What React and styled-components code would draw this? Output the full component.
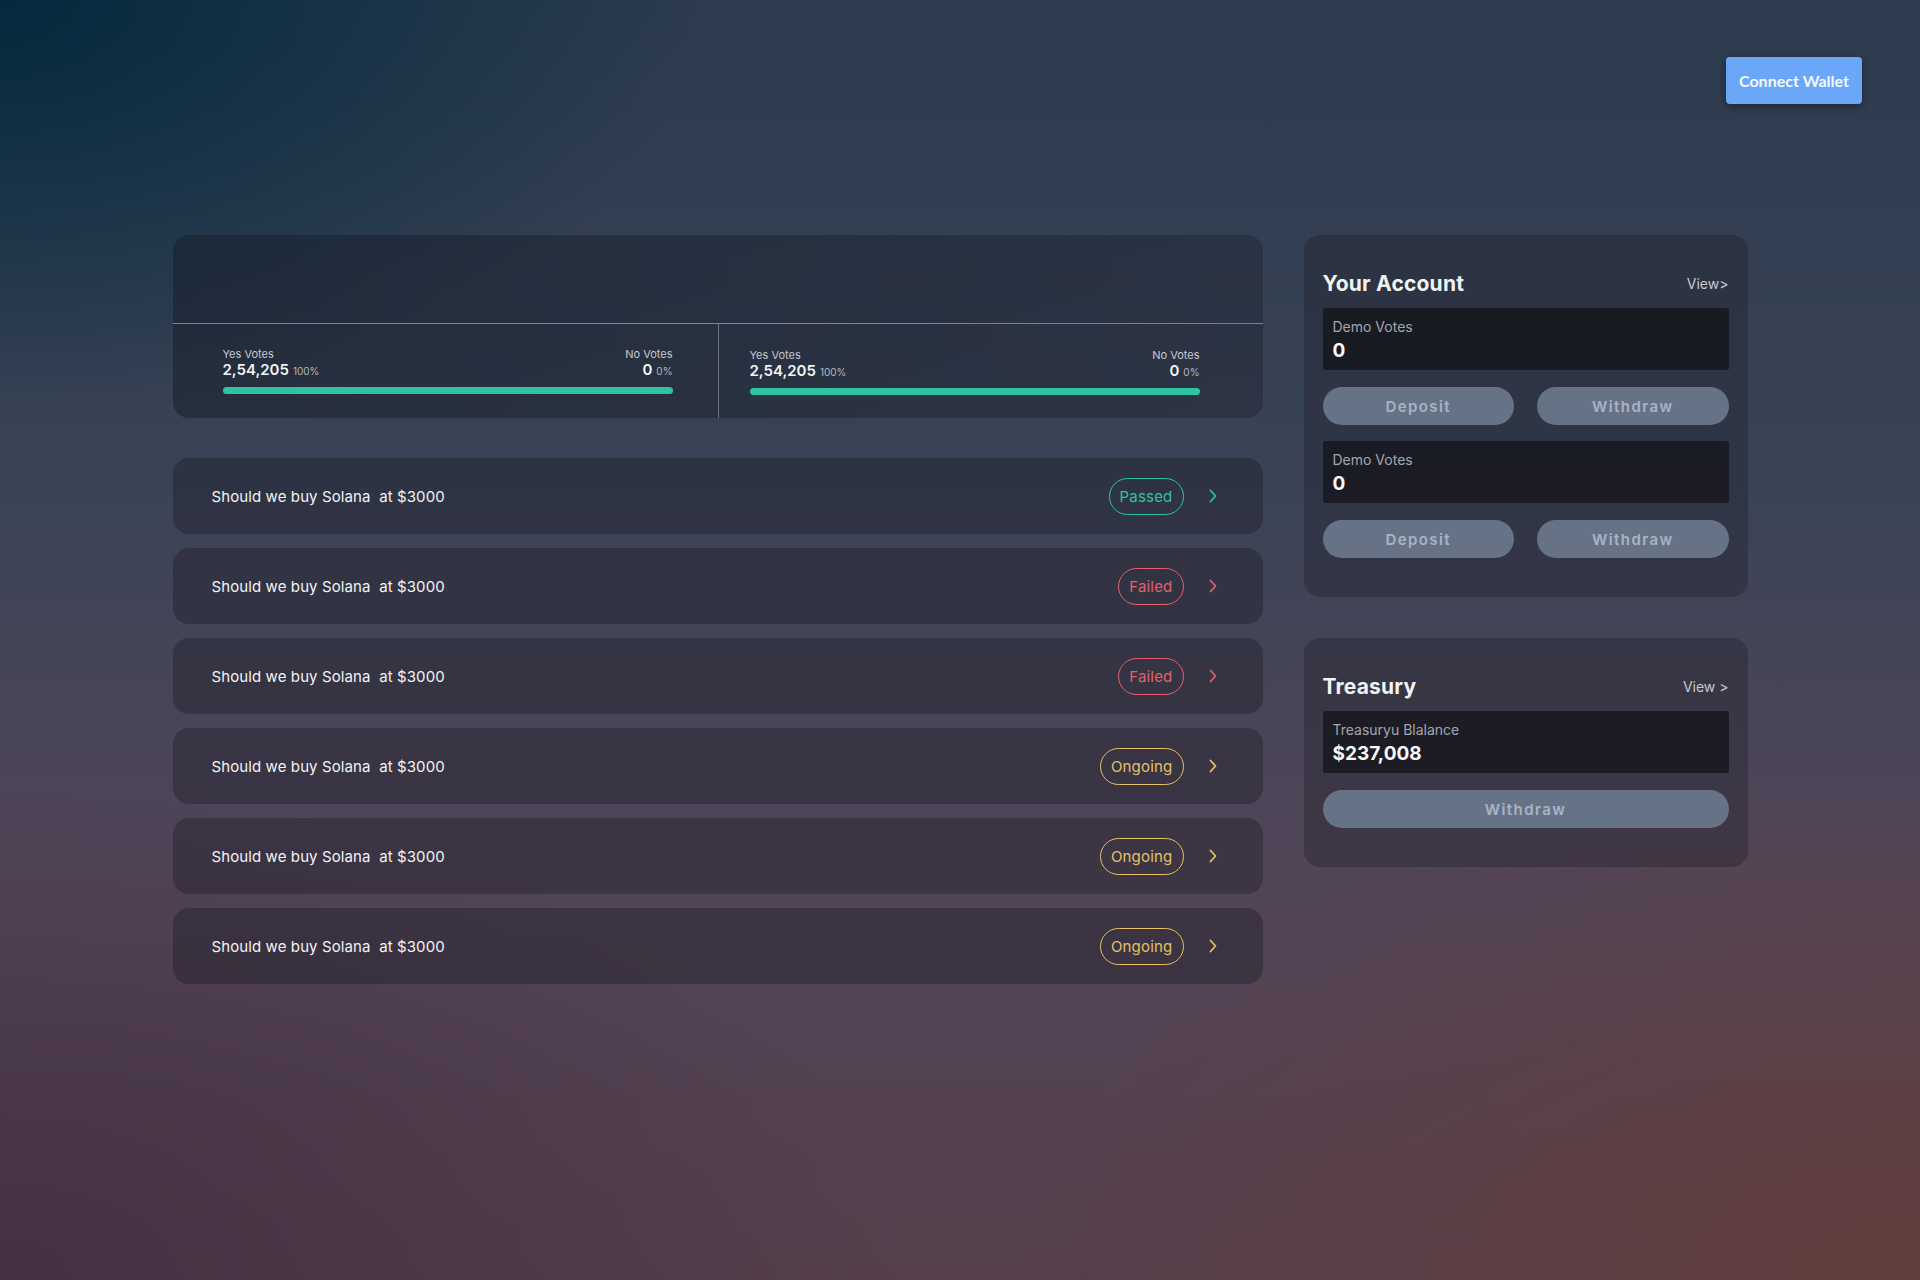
import React from 'react'
import styled, { createGlobalStyle } from 'styled-components'

const color = {
  white: '#f2f3f5',
  muted: '#a3a6ae',
  passed: '#2fc4a0',
  failed: '#e4606c',
  ongoing: '#e7c163',
  button: '#667387',
  buttonText: '#a9b4c5',
  wallet: '#6aa7f8'
}

const GlobalStyle = createGlobalStyle`
  html, body {
    margin: 0;
    padding: 0;
  }
  body {
    font-family: Inter, "Noto Sans", sans-serif;
    color: ${color.white};
  }
  * {
    box-sizing: border-box;
  }
`

const SCPage = styled.div`
  min-height: 1280px;
  background:
    radial-gradient(ellipse 700px 420px at 0% 0%, rgba(2, 40, 60, 0.95) 0%, rgba(2, 40, 60, 0) 100%),
    radial-gradient(ellipse 900px 500px at 0% 100%, rgba(62, 44, 64, 0.8) 0%, rgba(62, 44, 64, 0) 100%),
    radial-gradient(ellipse 900px 500px at 100% 100%, rgba(100, 62, 58, 0.85) 0%, rgba(100, 62, 58, 0) 100%),
    linear-gradient(180deg, #2c3b4e 0%, #3a4356 38%, #524558 68%, #553f4c 100%);
  padding: 57px 58px 0;
`

const SCHeader = styled.header`
  display: flex;
  justify-content: flex-end;
`

const SCWallet = styled.button`
  width: 136px;
  height: 47px;
  border: none;
  border-radius: 4px;
  background: ${color.wallet};
  color: #f4f8ff;
  font-family: Lato, "Noto Sans", sans-serif;
  font-weight: 700;
  font-size: 16px;
  box-shadow: 0 3px 8px rgba(0, 0, 0, 0.35);
`

const SCMain = styled.main`
  display: grid;
  grid-template-columns: 1090px 444px;
  gap: 41px;
  width: 1575px;
  margin: 131px auto 0;
  align-items: start;
`

const SCColumn = styled.div`
  display: flex;
  flex-direction: column;
  gap: ${props => props.gap}px;
`

const SCTopCard = styled.section`
  border-radius: 16px;
  background: linear-gradient(100deg, rgba(22, 30, 42, 0.55) 0%, rgba(28, 32, 44, 0.4) 100%);
  overflow: hidden;
  margin-bottom: 26px;
`

const SCTopBlank = styled.div`
  height: 89px;
  border-bottom: 1px solid rgba(190, 196, 208, 0.55);
`

const SCPanes = styled.div`
  display: flex;
  height: 94px;
`

const SCPane = styled.div`
  width: 50%;
  flex: none;
  padding: ${props => props.top}px 0 0 ${props => props.left}px;
  border-left: ${props => props.divider ? '1px solid rgba(190, 196, 208, 0.45)' : 'none'};
`

const SCVoteInner = styled.div`
  width: 450px;
`

const SCVoteRow = styled.div`
  display: flex;
  justify-content: space-between;
  align-items: flex-end;
`

const SCVoteSide = styled.div`
  display: flex;
  flex-direction: column;
  align-items: ${props => props.right ? 'flex-end' : 'flex-start'};
`

const SCVoteLabel = styled.div`
  font-size: 11px;
  line-height: 13px;
  color: #c6c9cf;
`

const SCVoteValue = styled.div`
  font-size: 15px;
  line-height: 18px;
  font-weight: 600;
  color: ${color.white};
  span {
    font-size: 10px;
    font-weight: 400;
    color: #b5b8bf;
    margin-left: 4px;
  }
`

const SCBar = styled.div`
  margin-top: 7px;
  height: 7px;
  border-radius: 4px;
  background: ${color.passed};
`

const SCRow = styled.div`
  display: flex;
  align-items: center;
  height: 76px;
  padding: 0 46px 0 39px;
  border-radius: 16px;
  background: rgba(30, 30, 40, 0.42);
`

const SCRowTitle = styled.div`
  flex: 1;
  font-size: 15px;
  font-weight: 400;
  letter-spacing: 0.1px;
  color: ${color.white};
  white-space: pre;
`

const SCBadge = styled.div`
  height: 37px;
  padding: 0 10px;
  display: flex;
  align-items: center;
  border-radius: 19px;
  border: 1.5px solid ${props => color[props.status]};
  color: ${props => color[props.status]};
  font-size: 15px;
  font-weight: 400;
  letter-spacing: 0.2px;
`

const SCChevron = styled.svg`
  margin-left: 25px;
  width: 8px;
  height: 14px;
  stroke: ${props => color[props.status]};
`

const SCSideCard = styled.section`
  border-radius: 16px;
  background: rgba(30, 30, 40, 0.36);
  padding: 35px 19px 39px;
  display: flex;
  flex-direction: column;
`

const SCSideHead = styled.div`
  display: flex;
  justify-content: space-between;
  align-items: center;
  height: 26px;
  margin-bottom: 12px;
`

const SCSideTitle = styled.h2`
  margin: 0;
  font-size: 21px;
  font-weight: 700;
  letter-spacing: 0.2px;
  color: ${color.white};
`

const SCView = styled.a`
  font-size: 14px;
  color: #c7cad0;
`

const SCBox = styled.div`
  background: rgba(18, 18, 24, 0.72);
  border-radius: 2px;
  padding: 10px 10px 7px;
  margin-top: ${props => props.gap || 0}px;
`

const SCBoxLabel = styled.div`
  font-size: 14px;
  line-height: 18px;
  color: ${color.muted};
`

const SCBoxValue = styled.div`
  margin-top: 3px;
  font-size: 19px;
  line-height: 24px;
  font-weight: 700;
  color: #fafafa;
`

const SCButtons = styled.div`
  display: grid;
  grid-template-columns: ${props => props.single ? '1fr' : '1fr 1fr'};
  gap: 23px;
  margin-top: ${props => props.gap}px;
`

const SCButton = styled.button`
  height: 38px;
  border: none;
  border-radius: 19px;
  background: ${color.button};
  color: ${color.buttonText};
  font-family: Inter, "Noto Sans", sans-serif;
  font-size: 15px;
  font-weight: 600;
  letter-spacing: 1.4px;
`

const proposals = ['passed', 'failed', 'failed', 'ongoing', 'ongoing', 'ongoing']
const statusLabel = { passed: 'Passed', failed: 'Failed', ongoing: 'Ongoing' }

function VotePane ({ left, top, divider }) {
  return (
    <SCPane left={left} top={top} divider={divider}>
      <SCVoteInner>
        <SCVoteRow>
          <SCVoteSide>
            <SCVoteLabel>Yes Votes</SCVoteLabel>
            <SCVoteValue>2,54,205<span>100%</span></SCVoteValue>
          </SCVoteSide>
          <SCVoteSide right>
            <SCVoteLabel>No Votes</SCVoteLabel>
            <SCVoteValue>0<span>0%</span></SCVoteValue>
          </SCVoteSide>
        </SCVoteRow>
        <SCBar />
      </SCVoteInner>
    </SCPane>
  )
}

function Holding ({ gap }) {
  return (
    <>
      <SCBox gap={gap}>
        <SCBoxLabel>Demo Votes</SCBoxLabel>
        <SCBoxValue>0</SCBoxValue>
      </SCBox>
      <SCButtons gap={17}>
        <SCButton>Deposit</SCButton>
        <SCButton>Withdraw</SCButton>
      </SCButtons>
    </>
  )
}

export default function App () {
  return (
    <SCPage>
      <GlobalStyle />
      <SCHeader>
        <SCWallet>Connect Wallet</SCWallet>
      </SCHeader>
      <SCMain>
        <SCColumn gap={14}>
          <SCTopCard>
            <SCTopBlank />
            <SCPanes>
              <VotePane left={50} top={24} />
              <VotePane left={31} top={25} divider />
            </SCPanes>
          </SCTopCard>
          {proposals.map((status, i) => (
            <SCRow key={i}>
              <SCRowTitle>Should we buy Solana  at $3000</SCRowTitle>
              <SCBadge status={status}>{statusLabel[status]}</SCBadge>
              <SCChevron status={status} viewBox="0 0 8 14" fill="none" strokeWidth="1.8" strokeLinecap="round" strokeLinejoin="round">
                <path d="M1.5 1.5 L6.5 7 L1.5 12.5" />
              </SCChevron>
            </SCRow>
          ))}
        </SCColumn>
        <SCColumn gap={41}>
          <SCSideCard>
            <SCSideHead>
              <SCSideTitle>Your Account</SCSideTitle>
              <SCView>View&gt;</SCView>
            </SCSideHead>
            <Holding />
            <Holding gap={16} />
          </SCSideCard>
          <SCSideCard>
            <SCSideHead>
              <SCSideTitle>Treasury</SCSideTitle>
              <SCView>View &gt;</SCView>
            </SCSideHead>
            <SCBox>
              <SCBoxLabel>Treasuryu Blalance</SCBoxLabel>
              <SCBoxValue>$237,008</SCBoxValue>
            </SCBox>
            <SCButtons single gap={17}>
              <SCButton>Withdraw</SCButton>
            </SCButtons>
          </SCSideCard>
        </SCColumn>
      </SCMain>
    </SCPage>
  )
}
